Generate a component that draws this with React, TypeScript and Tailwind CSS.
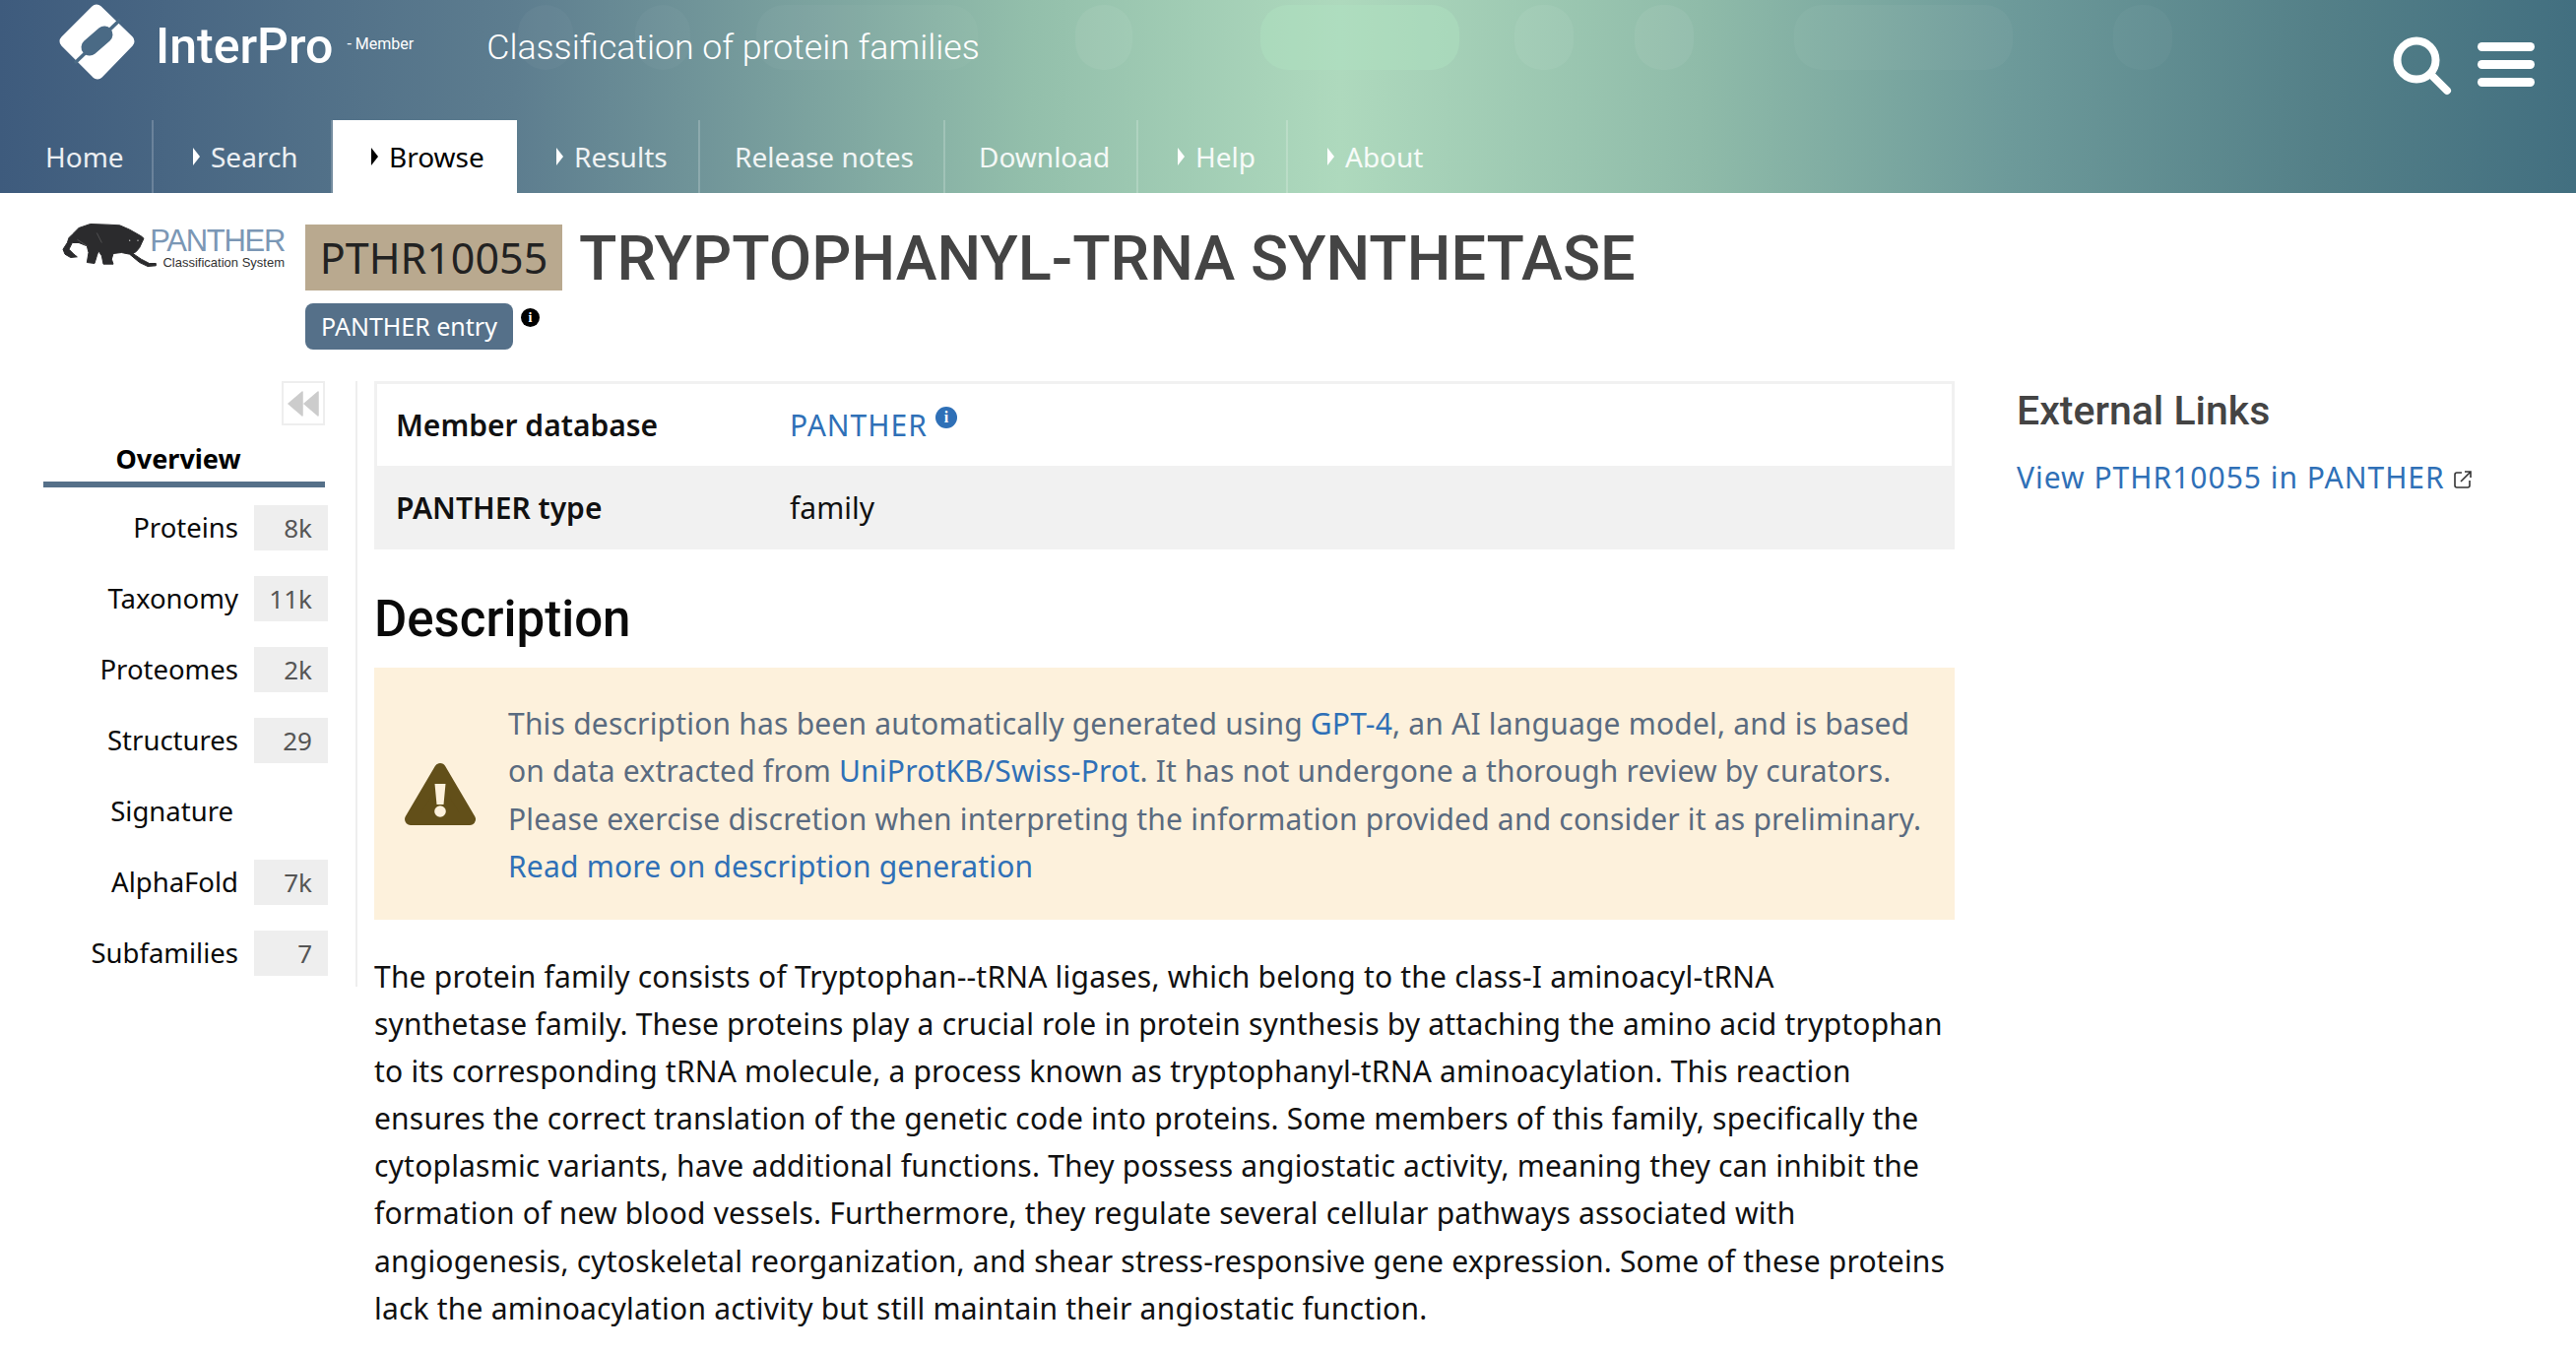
const bodyFont = "font-['Noto_Sans',sans-serif]";

const navItems = [
  { label: 'Home', width: 'w-[156px]', pad: 'pl-[46px]', arrow: false },
  { label: 'Search', width: 'w-[182px]', pad: 'pl-[40px]', arrow: true },
  { label: 'Browse', width: 'w-[187px]', pad: 'pl-[39px]', arrow: true, active: true },
  { label: 'Results', width: 'w-[186px]', pad: 'pl-[40px]', arrow: true },
  { label: 'Release notes', width: 'w-[249px]', pad: 'pl-[35px]', arrow: false },
  { label: 'Download', width: 'w-[196px]', pad: 'pl-[34px]', arrow: false },
  { label: 'Help', width: 'w-[152px]', pad: 'pl-[40px]', arrow: true },
  { label: 'About', width: 'w-[150px]', pad: 'pl-[40px]', arrow: true, last: true },
];

const sideItems = [
  { label: 'Proteins', count: '8k' },
  { label: 'Taxonomy', count: '11k' },
  { label: 'Proteomes', count: '2k' },
  { label: 'Structures', count: '29' },
  { label: 'Signature', count: '' },
  { label: 'AlphaFold', count: '7k' },
  { label: 'Subfamilies', count: '7' },
];

const description = [
  'The protein family consists of Tryptophan--tRNA ligases, which belong to the class-I aminoacyl-tRNA',
  'synthetase family. These proteins play a crucial role in protein synthesis by attaching the amino acid tryptophan',
  'to its corresponding tRNA molecule, a process known as tryptophanyl-tRNA aminoacylation. This reaction',
  'ensures the correct translation of the genetic code into proteins. Some members of this family, specifically the',
  'cytoplasmic variants, have additional functions. They possess angiostatic activity, meaning they can inhibit the',
  'formation of new blood vessels. Furthermore, they regulate several cellular pathways associated with',
  'angiogenesis, cytoskeletal reorganization, and shear stress-responsive gene expression. Some of these proteins',
  'lack the aminoacylation activity but still maintain their angiostatic function.',
];

function InterProLogo() {
  return (
    <svg viewBox="0 0 78 78" className="w-[78px] h-[78px]">
      <path d="M38 7 L70 38 L39 70 L7 38 Z" fill="#fff" stroke="#fff" strokeWidth="13" strokeLinejoin="round" />
      <path d="M62 16 L16 60" stroke="#4a6a85" strokeWidth="3.5" />
      <path d="M31 44 L46 31" stroke="#4a6a85" strokeWidth="17" strokeLinecap="round" />
    </svg>
  );
}

function PantherLogo() {
  return (
    <div className="flex items-start w-[232px] h-[56px] shrink-0">
      <svg viewBox="0 0 300 170" className="w-[100px] h-[57px] shrink-0 -mt-[4px]">
        <path
          d="M40 60 L60 40 L95 28 L150 30 L185 32 L215 45 L250 65 L258 72 L252 85 L245 100 L235 112 L225 118 L250 135 L275 148 L295 148 L295 155 L270 157 L245 145 L215 120 L190 115 L165 118 L160 135 L165 150 L135 150 L130 125 L120 110 L115 125 L108 148 L85 145 L90 115 L85 95 L60 85 L40 85 L30 105 L45 120 L55 128 L35 130 L18 120 L12 105 L25 85 L30 70 Z"
          fill="#2b2b2d"
          stroke="#2b2b2d"
          strokeWidth="3"
          strokeLinejoin="round"
        />
        <path d="M55 75 L85 95 M115 55 L130 85" stroke="#777" strokeWidth="1.5" fill="none" />
        <circle cx="215" cy="78" r="2" fill="#ddd" />
        <circle cx="240" cy="78" r="2" fill="#ddd" />
      </svg>
      <div className="flex flex-col items-end w-[136px] -ml-[7px] mt-[7px] font-['Liberation_Sans',sans-serif]">
        <span className="text-[31px] leading-[31px] text-[#7b97b5] tracking-[-1.3px]">PANTHER</span>
        <span className="text-[13px] leading-[14px] text-[#333] whitespace-nowrap">Classification System</span>
      </div>
    </div>
  );
}

function Blob({ className }: { className: string }) {
  return <div className={`absolute top-[5px] h-[66px] rounded-[28px] ${className}`} />;
}

function Header() {
  return (
    <header className={`relative h-[196px] overflow-hidden bg-[linear-gradient(90deg,#3e5b7d_0%,#5d7d8f_20%,#93bfab_40%,#aed9bd_52%,#8fbba9_66%,#6d9a9a_78%,#548088_90%,#426f80_100%)] text-white ${bodyFont}`}>
      <Blob className="left-[526px] w-[56px] bg-white/[0.03]" />
      <Blob className="left-[645px] w-[56px] bg-white/[0.03]" />
      <Blob className="left-[768px] w-[225px] bg-white/[0.03]" />
      <Blob className="left-[1092px] w-[58px] bg-white/[0.06]" />
      <Blob className="left-[1280px] w-[202px] bg-[#b0e2c2]/45" />
      <Blob className="left-[1538px] w-[60px] bg-white/[0.06]" />
      <Blob className="left-[1660px] w-[60px] bg-white/[0.06]" />
      <Blob className="left-[1822px] w-[222px] bg-white/[0.04]" />
      <Blob className="left-[2146px] w-[60px] bg-white/[0.03]" />
      <div className="relative h-[122px] flex items-start pl-[60px]">
        <div className="mt-[4px]"><InterProLogo /></div>
        <span className="ml-[20px] mt-[16px] text-[50px] leading-[62px] font-medium font-['Roboto',sans-serif]">InterPro</span>
        <span className="ml-[14px] mt-[35px] text-[16px] leading-[20px] font-['Roboto',sans-serif]">- Member</span>
        <span className="ml-[74px] mt-[26px] text-[35.7px] leading-[44px] font-light font-['Roboto',sans-serif]">Classification of protein families</span>
        <div className="ml-auto mr-[42px] mt-[35px] flex items-start">
          <svg viewBox="0 0 62 62" className="w-[62px] h-[62px]" fill="none" stroke="#fff" strokeWidth="8" strokeLinecap="round">
            <circle cx="26" cy="26" r="19.5" />
            <path d="M41 41 L57 57" />
          </svg>
          <div className="ml-[26px] mt-[8px] w-[58px] flex flex-col gap-[9px]">
            <div className="h-[9px] rounded-full bg-white" />
            <div className="h-[9px] rounded-full bg-white" />
            <div className="h-[9px] rounded-full bg-white" />
          </div>
        </div>
      </div>
      <nav className="relative h-[74px] flex">
        {navItems.map((item) => (
          <div
            key={item.label}
            className={`${item.width} ${item.pad} flex items-center gap-[11px] pb-[1px] text-[28px] ${item.active ? 'bg-white text-black' : item.last ? 'text-white/90' : 'border-r-2 border-white/20 text-white/90'}`}
          >
            {item.arrow && (
              <span className={`w-0 h-0 border-y-[9px] border-y-transparent border-l-[7px] ${item.active ? 'border-l-black' : 'border-l-white'}`} />
            )}
            {item.label}
          </div>
        ))}
      </nav>
    </header>
  );
}

function Sidebar() {
  return (
    <aside className="w-[363px] shrink-0 h-[615px] pl-[44px] border-r-2 border-[#eeeeee]">
      <div className="w-[286px] flex justify-end">
        <div className="w-[44px] h-[45px] border-2 border-[#eeeeee] flex items-center justify-center">
          <svg viewBox="0 0 32 26" className="w-[32px] h-[26px]">
            <path d="M15 1 L15 25 L1 13 Z M31 1 L31 25 L17 13 Z" fill="#cccccc" stroke="#cccccc" strokeLinejoin="round" strokeWidth="1.5" />
          </svg>
        </div>
      </div>
      <div className="w-[286px] h-[63px] flex items-center justify-center pt-[12px] pr-[12px] border-b-[6px] border-[#557089] text-[27px] font-bold text-black">
        Overview
      </div>
      <div className="w-[289px] pt-[18px] flex flex-col gap-[26px]">
        {sideItems.map((item) => (
          <div key={item.label} className="h-[46px] flex items-center text-[27.5px] text-[#0a0a0a]">
            <span className={`${item.count ? 'w-[198px] text-right' : 'w-[198px] text-right pr-[5px]'}`}>{item.label}</span>
            {item.count && (
              <span className="ml-[16px] w-[75px] h-[46px] pr-[16px] flex items-center justify-end bg-[#eeeeee] text-[#555] text-[26px]">
                {item.count}
              </span>
            )}
          </div>
        ))}
      </div>
    </aside>
  );
}

function Callout() {
  return (
    <div className="h-[256px] mt-[18px] bg-[#fdf1dc] flex items-center pl-[31px] text-[#5a6b80]">
      <svg viewBox="0 0 72 64" className="w-[72px] h-[64px] shrink-0">
        <path d="M36 7 L66 58 L6 58 Z" fill="#624f19" stroke="#624f19" strokeWidth="12" strokeLinejoin="round" />
        <path d="M30.5 22 L41.5 22 L39.5 43 L32.5 43 Z" fill="#fdf1dc" />
        <circle cx="36" cy="50" r="5.8" fill="#fdf1dc" />
      </svg>
      <div className="ml-[33px] pt-[3px] text-[30px] tracking-[0.2px] leading-[48.3px] whitespace-nowrap">
        <p>This description has been automatically generated using <span className="text-[#2f70b7]">GPT-4</span>, an AI language model, and is based</p>
        <p>on data extracted from <span className="text-[#2f70b7]">UniProtKB/Swiss-Prot</span>. It has not undergone a thorough review by curators.</p>
        <p>Please exercise discretion when interpreting the information provided and consider it as preliminary.</p>
        <p className="text-[#2f70b7]">Read more on description generation</p>
      </div>
    </div>
  );
}

function MainContent() {
  return (
    <main className="w-[1605px] ml-[17px] shrink-0">
      <div className="border-[3px] border-b-0 border-[#f1f1f1] h-[86px] flex items-center pl-[19px] text-[30px] text-[#111]">
        <span className="w-[400px] font-semibold">Member database</span>
        <span className="text-[#2f70b7] tracking-[1px]">PANTHER</span>
        <span className="ml-[8px] -mt-[16px] w-[22px] h-[22px] rounded-full bg-[#2f70b7] text-white text-[16px] leading-[22px] text-center font-bold font-['Liberation_Serif',serif]">i</span>
      </div>
      <div className="bg-[#f1f1f1] h-[85px] flex items-center pl-[22px] text-[30px] text-[#111]">
        <span className="w-[400px] font-semibold">PANTHER type</span>
        <span>family</span>
      </div>
      <h2 className="mt-[40px] text-[51px] leading-[62px] font-medium text-[#0a0a0a] font-['Roboto',sans-serif]">Description</h2>
      <Callout />
      <div className="mt-[34px] text-[30px] tracking-[0.2px] leading-[48.1px] text-[#111] whitespace-nowrap">
        {description.map((line) => (
          <p key={line}>{line}</p>
        ))}
      </div>
    </main>
  );
}

export default function App() {
  return (
    <div className={`w-[2616px] h-[1374px] overflow-hidden bg-white ${bodyFont}`}>
      <Header />
      <div className="h-[191px] pl-[60px] pt-[26px] flex items-start">
        <PantherLogo />
        <div className="ml-[18px]">
          <div className="flex items-start">
            <span className="w-[261px] h-[67px] mt-[6px] pt-[2px] flex items-center justify-center bg-[#b9a98f] text-[43px] text-[#222]">PTHR10055</span>
            <h1 className="ml-[17px] mt-[5px] text-[63px] leading-[72px] font-medium text-[#444] font-['Roboto',sans-serif]">TRYPTOPHANYL-TRNA SYNTHETASE</h1>
          </div>
          <div className="mt-[9px] flex items-start">
            <span className="w-[211px] h-[47px] flex items-center justify-center rounded-[8px] bg-[#557089] text-white text-[25px]">PANTHER entry</span>
            <span className="ml-[8px] mt-[5px] w-[19px] h-[19px] rounded-full bg-black text-white text-[14px] leading-[19px] text-center font-bold font-['Liberation_Serif',serif]">i</span>
          </div>
        </div>
      </div>
      <div className="flex items-start">
        <Sidebar />
        <MainContent />
        <aside className="ml-[63px] pt-[6px]">
          <h3 className="text-[41px] leading-[48px] font-medium text-[#444] font-['Roboto',sans-serif]">External Links</h3>
          <div className="mt-[23px] flex items-center text-[30px] leading-[42px] tracking-[1px] text-[#2f70b7]">
            View PTHR10055 in PANTHER
            <svg viewBox="0 0 20 20" className="ml-[8px] mt-[4px] w-[20px] h-[20px]" fill="none" stroke="#333" strokeWidth="1.6">
              <path d="M9 3 H4 Q2 3 2 5 V16 Q2 18 4 18 H15 Q17 18 17 16 V11" />
              <path d="M8 12 L18 2 M12 2 H18 V8" />
            </svg>
          </div>
        </aside>
      </div>
    </div>
  );
}
